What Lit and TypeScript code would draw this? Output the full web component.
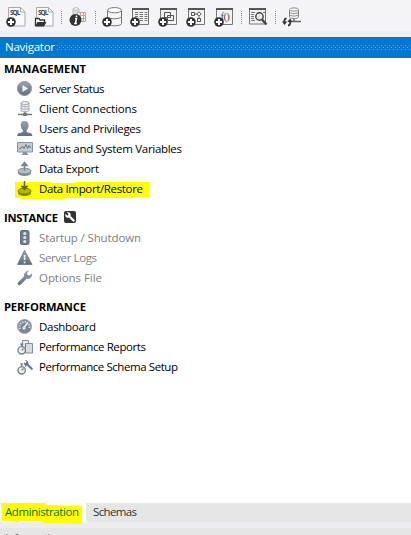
import { LitElement, html, svg, css } from "lit";
import { customElement, property } from "lit/decorators.js";

const gradient = svg`<defs><linearGradient id="g" x1="0" y1="0" x2="0" y2="1"><stop offset="0" stop-color="#9aa3ac"/><stop offset="1" stop-color="#646d7a"/></linearGradient></defs>`;

const plus = svg`<circle cx="5" cy="15" r="4.800" fill="#333"/><path d="M5 12v6M2 15h6" stroke="#fff" stroke-width="2"/>`;
const sheet = svg`<path d="M2.5.5h12l4.500 4.500v14h-16.500z" fill="#fafafa" stroke="#aaa"/><path d="M14.500.5v4.500H19z" fill="#fff" stroke="#aaa"/><text x="4" y="7.500" class="sql" textLength="10.500">SQL</text>`;
const frame = svg`<path d="M2.500 2.500h16v15h-16z" fill="#f2f2f2" stroke="#777"/><path d="M2 1h17v2H2z" fill="#555"/>`;
const drum = svg`<path d="M5.500 3.500v13c0 3 14 3 14 0v-13" fill="#f6f6f6" stroke="#777"/><ellipse cx="12.500" cy="3.200" rx="7" ry="2.600" fill="#fff" stroke="#777"/><path d="M5.500 9.500c1 3 13 3 14 0" fill="none" stroke="#777"/>`;
const stopwatch = svg`<circle cx="4.700" cy="11.300" r="3.700" fill="#eee" stroke="#7c858e" stroke-width="1.400"/><path d="M4.700 7V5M3 5h3.400M4.700 11.300l1.800-1.800M8 7.500l1-1" stroke="#6b747d" stroke-width="1.200"/>`;

const toolIcons: Record<string, unknown> = {
  newSql: svg`${sheet}${plus}`,
  openSql: svg`${sheet}<path d="M1.500 19v-7.500h3.500l1 1.500h4.500V15" fill="#fff" stroke="#333" stroke-width="1.300"/><path d="M1 19.500 3.500 15h9L10 19.500z" fill="#333"/>`,
  info: svg`<path d="M4 2v10c0 1 6 1 6 0V2" fill="#ddd" stroke="#bbb"/><ellipse cx="7" cy="2" rx="3" ry="1.300" fill="#f4f4f4" stroke="#bbb"/><path d="M8.500 5.500h8v9h-8z" fill="#f2f2f2" stroke="#b7aaa3"/><path d="M9 8.500h8M9 11.500h8M11.500 6v9M14.500 6v9" stroke="#b7aaa3"/><circle cx="6.500" cy="13" r="6" fill="#333"/><path d="M6 11.500h1.500l-1 5M5 16.500h3M7.500 8.500v1.600" stroke="#fff" stroke-width="1.500" fill="none"/>`,
  schema: svg`${drum}${plus}`,
  table: svg`${frame}<path d="M5 5.500h3M5 7.500h3M5 9.500h3M9.500 5.500h3.500M9.500 7.500h3.500M9.500 9.500h3.500M9.500 11.500h3.500M9.500 13.500h3.500M14.500 5.500h3M14.500 7.500h3M14.500 9.500h3M14.500 11.500h3M14.500 13.500h3" stroke="#777"/>${plus}`,
  view: svg`${frame}<path d="M6.500 5.500h6v5h-6zM9.500 8.500h6v5h-6z" fill="none" stroke="#555"/>${plus}`,
  procedure: svg`${frame}<path d="M5.500 5.500h3v3h-3zM11.500 11.500h3v3h-3zM13 4.800l2.200 2.200L13 9.200 10.800 7zM8.500 7H11M13 9.500V12" fill="none" stroke="#555"/>${plus}`,
  function: svg`${frame}<text x="6.500" y="13" class="fn" textLength="9.500">f()</text>${plus}`,
  search: svg`<path d="M.5 2.500h16v14.500h-16z" fill="#f2f2f2" stroke="#777"/><path d="M0 1h17v2H0z" fill="#555"/><path d="M2 5.500h4M2 7.500h3M2 9.500h3M2 11.500h3M2 13.500h4M14 5.500h2" stroke="#777"/><circle cx="10.500" cy="9.500" r="3.700" fill="#e4e9e8" stroke="#444" stroke-width="1.400"/><path d="m13 12.500 4.500 5" stroke="#444" stroke-width="2.400"/>`,
  reconnect: svg`<path d="M7.500 2.500v7.500c0 2 9 2 9 0V2.500" fill="#fafafa" stroke="#888"/><ellipse cx="12" cy="2.500" rx="4.500" ry="1.600" fill="#fff" stroke="#888"/><path d="M7.500 5c0 2 9 2 9 0M7.500 7.500c0 2 9 2 9 0" fill="none" stroke="#888"/><path d="M12 12v3M9 14.500h10" stroke="#5b656d" stroke-width="1.500"/><path d="M4.500 11.500c-2 0-2.500 1.500-2 5M6 18.500c2 0 2.500-2 2-5" fill="none" stroke="#333" stroke-width="1.800"/><path d="m0 14.500 2.600 3.500 2.500-3.500zM5.300 15 8 11.500l2.500 3.500z" fill="#333"/>`,
};

const icons: Record<string, unknown> = {
  status: svg`<circle cx="7.500" cy="7.500" r="7" fill="url(#g)" stroke="#88919b"/><path d="M5.500 4v7l5.500-3.500z" fill="#f2f4f6"/>`,
  clients: svg`<path d="M4 2v7.500c0 1.600 8 1.600 8 0V2" fill="#e8eaec" stroke="#a1a8af"/><ellipse cx="8" cy="2" rx="4" ry="1.500" fill="#f5f5f5" stroke="#a1a8af"/><path d="M4 4.500c0 1.500 8 1.500 8 0M4 7c0 1.500 8 1.500 8 0" fill="none" stroke="#a1a8af"/><path d="M8 11v2M1 13.500h14" stroke="#727b85" stroke-width="1.600"/><path d="M6 12h4v3H6z" fill="#727b85"/>`,
  user: svg`<path d="M7.500 0C4.500 0 3.500 2 3.800 5c.2 2 1 3.200 2 4v2L1 12.500 0 15h15.500l-1-2.500L9.700 11V9c1-.8 1.700-2 1.900-4 .3-3-1-5-4.100-5z" fill="url(#g)"/>`,
  variables: svg`<path d="M.5 1.500h15v9.500H.5z" fill="#c5cbd1" stroke="#89929b"/><path d="m2 8 2-1 1.500-2L7 7.500l2-4 1.500 4 1.500-3 1 2h1" fill="none" stroke="#69727c"/><path d="M6 11h4v1.500l2 1.500H4l2-1.500z" fill="#89929b"/>`,
  export: svg`<path d="M1 10v2c0 4 13 4 13 0v-2" fill="#858e98"/><ellipse cx="7.500" cy="10" rx="6.500" ry="2.800" fill="#b8bec4" stroke="#858e98"/><path d="M7.500 10V3M5 4.500 7.500 1.500l2.500 3z" stroke="#7b858f" stroke-width="1.500" fill="#7b858f"/>`,
  import: svg`<path d="M1 10v2c0 4 13 4 13 0v-2" fill="#858900"/><ellipse cx="7.500" cy="10" rx="6.500" ry="2.800" fill="#b6b900" stroke="#858900"/><path d="M7.500 0v7M5 5.500h5l-2.500 3z" stroke="#666800" stroke-width="1.500" fill="#666800"/>`,
  light: svg`<rect x="3.500" y=".5" width="8.500" height="14" rx="1.500" fill="#737d88" stroke="#626c76"/><g fill="#e0e3e6"><circle cx="7.800" cy="3.500" r="1.600"/><circle cx="7.800" cy="7.500" r="1.600"/><circle cx="7.800" cy="11.500" r="1.600"/></g>`,
  logs: svg`<path d="M7.500.5 15 14.500H.5z" fill="url(#g)" stroke="#7b848d" stroke-linejoin="round"/><path d="M7.600 5v5M7.600 11.500v1.700" stroke="#f0f2f4" stroke-width="1.700"/>`,
  wrench: svg`<path d="m1 12.500 6-6C6.500 3 9 .5 12 .7L10 3l.5 2 2.200.5L15 3.200c.8 3.300-2 6.300-5.500 5.600l-6 6c-1.700 1.200-3.700-.6-2.500-2.300z" fill="url(#g)"/>`,
  dashboard: svg`<circle cx="7.500" cy="7.500" r="7" fill="#7b858f" stroke="#9aa2aa"/><path d="M3 10a5 5 0 1 1 9 0" fill="none" stroke="#d8dce0" stroke-width="2" stroke-dasharray="1.500 1"/><path d="m10.500 4-4 5" stroke="#fff" stroke-width="1.300"/><circle cx="7" cy="9" r="1.700" fill="#e1e4e7"/>`,
  reports: svg`<path d="M5.500 1.500h6v10h-6z" fill="#eee" stroke="#858e97"/><path d="M8.500 4.500H15.500v9.500h-7z" fill="#d8dcdf" stroke="#858e97"/>${stopwatch}`,
  setup: svg`${stopwatch}<path d="m8 1 1.600 1.600L8.800 4.300 7 3.800C6.800 6 8.300 7 10 6.600l4.300 4.200c.9.500 2-.8 1.400-1.600l-4.200-4C11.700 2.500 10 .7 8 1z" fill="#69727c"/>`,
};

@customElement("fit-label")
class FitLabel extends LitElement {
  @property() text = "";
  @property({ type: Number }) width = 50;
  static styles = css`
    :host { display: block; height: 18px; }
    svg { display: block; height: 18px; overflow: visible; }
    text { font: inherit; fill: currentColor; white-space: pre; }
  `;
  render() {
    return html`<svg width=${this.width}>${svg`<text y="13" textLength=${this.width} lengthAdjust="spacing">${this.text}</text>`}</svg>`;
  }
}

const sections = [
  { title: "MANAGEMENT", width: 82, items: [
    ["status", "Server Status", 65.5], ["clients", "Client Connections", 98], ["user", "Users and Privileges", 102],
    ["variables", "Status and System Variables", 143], ["export", "Data Export", 60], ["import", "Data Import/Restore", 104],
  ] },
  { title: "INSTANCE", width: 54, items: [
    ["light", "Startup / Shutdown", 102], ["logs", "Server Logs", 58], ["wrench", "Options File", 63],
  ] },
  { title: "PERFORMANCE", width: 82, items: [
    ["dashboard", "Dashboard", 57], ["reports", "Performance Reports", 107], ["setup", "Performance Schema Setup", 139],
  ] },
] as { title: string; width: number; items: [string, string, number][] }[];

@customElement("app-root")
class AppRoot extends LitElement {
  static styles = css`
    :host { display: flex; flex-direction: column; width: 411px; height: 535px; overflow: hidden; background: #fff; color: #000; font: 11.500px "Open Sans", "Noto Sans", sans-serif; }
    svg { display: block; overflow: visible; flex: none; }
    .toolbar { box-sizing: border-box; height: 37px; flex: none; display: flex; align-items: flex-start; background: #f4f4f7; border-bottom: 6px solid #efeff2; padding: 7px 0 0 6px; }
    .tools { display: flex; gap: 8px; }
    .tool { width: 20px; height: 20px; }
    .sep { width: 1px; height: 13px; margin: 4px 7px 0; background: repeating-linear-gradient(#8b8b91 0 1px, transparent 1px 2px); }
    .tight { margin: 4px 6px 0; }
    .sql { font: bold 6.500px "Open Sans", sans-serif; fill: #444; }
    .fn { font: 11px "Liberation Serif", serif; fill: #555; }
    .header { height: 21px; flex: none; display: flex; background: #0078d0; color: #fff; padding-left: 5px; }
    .header fit-label { padding-top: 1px; }
    .grip { flex: 1; height: 5px; margin: 8px 0 0 2px; }
    .body { flex: none; box-sizing: border-box; height: 445px; padding-top: 2px; }
    .title { height: 20px; display: flex; padding-left: 4px; font-weight: 700; font-size: 11.200px; }
    .title svg { margin: 2px 0 0 6px; }
    .section { margin-bottom: 9px; }
    .item { height: 20px; display: flex; padding-left: 17px; position: relative; }
    .item svg { margin: 1px 7px 0 0; position: relative; }
    .item fit-label { position: relative; }
    .disabled { color: #808080; }
    .mark { position: absolute; left: 15px; top: 2px; width: 134px; height: 17px; background: #ff0; clip-path: polygon(0 0, 36px 0, 36px 1px, 61px 1px, 61px 0, 100% 0, 100% 15px, 118px 15px, 118px 16px, 50px 16px, 50px 17px, 5px 17px, 5px 16px, 0 16px); }
    .tabs { height: 19px; flex: none; display: flex; background: #e6e6e6; color: #333; }
    .tab { position: relative; padding-left: 5px; width: 81px; background: #fff; color: #176f00; }
    .tab fit-label { position: relative; }
    .tabmark { position: absolute; left: 1px; top: 0; width: 81px; height: 21px; background: #ff0; clip-path: polygon(0 0, 45px 0, 45px 2px, 81px 3px, 81px 21px, 43px 20px, 39px 18px, 18px 18px, 18px 19px, 1px 18px); }
    .schemas { padding-left: 7px; }
    .gap { height: 6px; flex: none; background: #ededf0; }
    .panel { height: 7px; flex: none; overflow: hidden; background: #e6e6e6; color: #666; padding-left: 5px; }
    .panel fit-label { padding-top: 1px; }
  `;

  tools(...names: string[]) {
    return html`<div class="tools">${names.map((name) => html`<svg class="tool" viewBox="0 0 20 20">${toolIcons[name]}</svg>`)}</div>`;
  }

  render() {
    const sep = html`<div class="sep"></div>`;
    const tightSep = html`<div class="sep tight"></div>`;
    return html`
      <div class="toolbar">
        ${this.tools("newSql", "openSql")}${sep}${this.tools("info")}${tightSep}
        ${this.tools("schema", "table", "view", "procedure", "function")}${sep}
        ${this.tools("search")}${tightSep}${this.tools("reconnect")}
      </div>
      <div class="header">
        <fit-label text="Navigator" width="50"></fit-label>
        <svg class="grip"><defs><pattern id="dots" width="4" height="5" patternUnits="userSpaceOnUse"><path d="M0 0h1v1H0zM2 2h1v1H2zM0 4h1v1H0z" fill="#58b4f4"/></pattern></defs><rect width="354" height="5" fill="url(#dots)"/></svg>
      </div>
      <div class="body">
        ${sections.map((s, i) => html`<div class="section">
          <div class="title"><fit-label text=${s.title} width=${s.width}></fit-label>
            ${i === 1 ? html`<svg width="12" height="12"><rect width="12" height="12" rx="2" fill="#333"/><path d="M4 4 9.500 9.500" stroke="#fff" stroke-width="2.400" stroke-linecap="round"/><circle cx="4" cy="4" r="2.700" fill="#fff"/><path d="m1 1 3 3" stroke="#333" stroke-width="1.800"/></svg>` : ""}
          </div>
          ${s.items.map(([icon, label, width]) => html`<div class="item ${i === 1 ? "disabled" : ""}">
            ${icon === "import" ? html`<div class="mark"></div>` : ""}
            <svg width="15" height="16">${gradient}${icons[icon]}</svg>
            <fit-label text=${label} width=${width}></fit-label>
          </div>`)}
        </div>`)}
      </div>
      <div class="tabs">
        <div class="tab"><div class="tabmark"></div><fit-label text="Administration" width="74"></fit-label></div>
        <div class="schemas"><fit-label text="Schemas" width="44"></fit-label></div>
      </div>
      <div class="gap"></div>
      <div class="panel"><fit-label text="Information" width="58"></fit-label></div>
    `;
  }
}
